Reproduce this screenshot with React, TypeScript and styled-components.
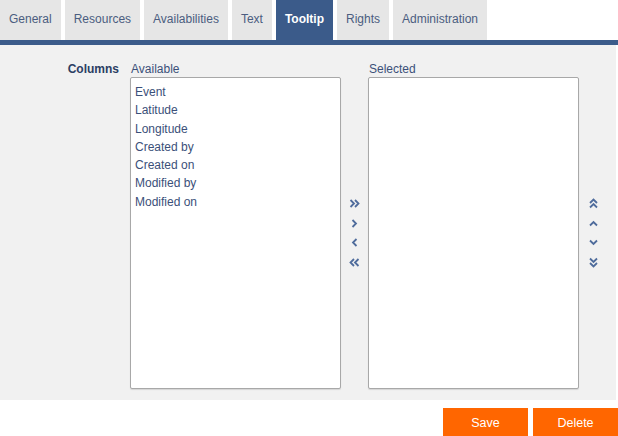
import React from "react";
import styled, { createGlobalStyle } from "styled-components";

const GlobalStyle = createGlobalStyle`
  html, body {
    margin: 0;
    padding: 0;
    background: #ffffff;
    font-family: "Liberation Sans", Arial, sans-serif;
    font-size: 12px;
  }
`;

const tabs = [
  "General",
  "Resources",
  "Availabilities",
  "Text",
  "Tooltip",
  "Rights",
  "Administration",
];

const available = [
  "Event",
  "Latitude",
  "Longitude",
  "Created by",
  "Created on",
  "Modified by",
  "Modified on",
];

const Page = styled.div`
  width: 618px;
  height: 436px;
  overflow: hidden;
  display: flex;
  flex-direction: column;
`;

const TabBar = styled.div`
  display: flex;
  flex: none;
  gap: 4px;
  height: 40px;
  border-bottom: 5px solid #3b5b8a;
`;

const Tab = styled.div<{ $active?: boolean }>`
  display: flex;
  align-items: center;
  padding: 0 9px 2px;
  background: ${(p) => (p.$active ? "#3b5b8a" : "#e6e6e6")};
  color: ${(p) => (p.$active ? "#ffffff" : "#4b5d80")};
  font-weight: ${(p) => (p.$active ? "bold" : "normal")};
  font-size: 12px;
`;

const Panel = styled.div`
  flex: none;
  background: #f1f1f1;
  margin-right: 2px;
  height: 355px;
  box-sizing: border-box;
  padding-top: 17px;
  display: grid;
  grid-template-columns: 130px 211px 27px 211px 28px;
  grid-template-rows: 15px 312px;
  align-content: start;
`;

const FieldLabel = styled.div`
  grid-row: 1;
  grid-column: 1;
  text-align: right;
  padding-right: 11px;
  font-weight: bold;
  color: #2b3e63;
  line-height: 15px;
`;

const ListLabel = styled.div<{ $col: number }>`
  grid-row: 1;
  grid-column: ${(p) => p.$col};
  padding-left: 1px;
  color: #3b5079;
  line-height: 15px;
`;

const ListBox = styled.div<{ $col: number }>`
  grid-row: 2;
  grid-column: ${(p) => p.$col};
  background: #ffffff;
  border: 1px solid #a8a8a8;
  border-radius: 2px;
  box-shadow: 0 1px 1px rgba(0, 0, 0, 0.12);
  padding: 5px 4px;
  box-sizing: border-box;
  height: 312px;
`;

const Item = styled.div`
  color: #3b5079;
  line-height: 18.3px;
`;

const ArrowColumn = styled.div<{ $col: number }>`
  grid-row: 2;
  grid-column: ${(p) => p.$col};
  display: flex;
  flex-direction: column;
  align-items: center;
  justify-content: center;
  gap: 7.5px;
`;

const ArrowButton = styled.div`
  width: 12px;
  height: 12px;
  display: flex;
  align-items: center;
  justify-content: center;
  svg {
    display: block;
  }
`;

const Footer = styled.div`
  display: flex;
  justify-content: flex-end;
  gap: 5px;
  padding-top: 8px;
`;

const ActionButton = styled.button`
  width: 85px;
  height: 30px;
  border: none;
  background: #ff6600;
  color: #ffffff;
  font-family: "Liberation Sans", Arial, sans-serif;
  font-size: 12.5px;
  padding: 0;
`;

const stroke = "#4f6c9c";

const Chevron = ({ dir, double }: { dir: "r" | "l" | "u" | "d"; double?: boolean }) => {
  const rot = { r: 0, l: 180, u: -90, d: 90 }[dir];
  return (
    <svg width="11" height="11" viewBox="0 0 11 11">
      <g transform={`rotate(${rot} 5.5 5.5)`} fill="none" stroke={stroke} strokeWidth="1.8">
        {double ? (
          <>
            <polyline points="1.5,2 5,5.5 1.5,9" />
            <polyline points="6,2 9.5,5.5 6,9" />
          </>
        ) : (
          <polyline points="3.5,2 7,5.5 3.5,9" />
        )}
      </g>
    </svg>
  );
};

export default function App() {
  return (
    <Page>
      <GlobalStyle />
      <TabBar>
        {tabs.map((t) => (
          <Tab key={t} $active={t === "Tooltip"}>
            {t}
          </Tab>
        ))}
      </TabBar>
      <Panel>
        <FieldLabel>Columns</FieldLabel>
        <ListLabel $col={2}>Available</ListLabel>
        <ListLabel $col={4}>Selected</ListLabel>
        <ListBox $col={2}>
          {available.map((a) => (
            <Item key={a}>{a}</Item>
          ))}
        </ListBox>
        <ArrowColumn $col={3}>
          <ArrowButton>
            <Chevron dir="r" double />
          </ArrowButton>
          <ArrowButton>
            <Chevron dir="r" />
          </ArrowButton>
          <ArrowButton>
            <Chevron dir="l" />
          </ArrowButton>
          <ArrowButton>
            <Chevron dir="l" double />
          </ArrowButton>
        </ArrowColumn>
        <ListBox $col={4} />
        <ArrowColumn $col={5}>
          <ArrowButton>
            <Chevron dir="u" double />
          </ArrowButton>
          <ArrowButton>
            <Chevron dir="u" />
          </ArrowButton>
          <ArrowButton>
            <Chevron dir="d" />
          </ArrowButton>
          <ArrowButton>
            <Chevron dir="d" double />
          </ArrowButton>
        </ArrowColumn>
      </Panel>
      <Footer>
        <ActionButton>Save</ActionButton>
        <ActionButton>Delete</ActionButton>
      </Footer>
    </Page>
  );
}
